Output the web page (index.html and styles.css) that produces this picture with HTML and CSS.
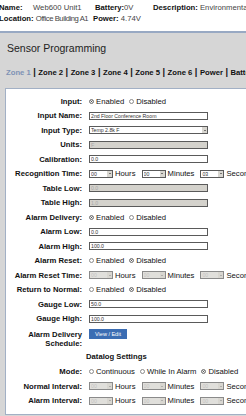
FILE: index.html
```html
<!DOCTYPE html>
<html lang="en">
<head>
    <meta charset="UTF-8">
    <meta name="viewport" content="width=device-width, initial-scale=1.0">
    <title>Sensor Programming</title>
    <link rel="stylesheet" href="styles.css">
</head>
<body>

    <div class="info">
        <div class="info-row">
            <span><b class="key">Name:</b>Web600 Unit1</span>
            <span><b>Battery:</b>0V</span>
            <span><b>Description:</b> Environmental Monitoring</span>
        </div>
        <div class="info-row">
            <span><b>Location:</b> <span class="tight">Office Building A1</span></span>
            <span class="shift"><b>Power:</b> 4.74V</span>
        </div>
    </div>

    <div class="panel">
        <h2>Sensor Programming</h2>
        <div class="tabs">
            <a class="tab active">Zone 1</a><span class="sep">|</span><a class="tab">Zone 2</a><span class="sep">|</span><a class="tab">Zone 3</a><span class="sep">|</span><a class="tab">Zone 4</a><span class="sep">|</span><a class="tab">Zone 5</a><span class="sep">|</span><a class="tab">Zone 6</a><span class="sep">|</span><a class="tab">Power</a><span class="sep">|</span><a class="tab">Battery</a>
        </div>

        <div class="box">
            <form id="sensorForm">
                <div class="row">
                    <label class="lbl">Input:</label>
                    <div class="field">
                        <label class="opt"><input type="radio" name="input" checked> Enabled</label>
                        <label class="opt"><input type="radio" name="input"> Disabled</label>
                    </div>
                </div>
                <div class="row">
                    <label class="lbl" for="inputName">Input Name:</label>
                    <div class="field"><input type="text" id="inputName" value="2nd Floor Conference Room"></div>
                </div>
                <div class="row">
                    <label class="lbl">Input Type:</label>
                    <div class="field"><span class="sel wide"><select><option>Temp 2.8k F</option></select></span></div>
                </div>
                <div class="row">
                    <label class="lbl">Units:</label>
                    <div class="field"><input type="text" value="F" disabled></div>
                </div>
                <div class="row">
                    <label class="lbl">Calibration:</label>
                    <div class="field"><input type="text" value="0.0"></div>
                </div>
                <div class="row">
                    <label class="lbl">Recognition Time:</label>
                    <div class="field">
                        <span class="sel"><select><option>00</option></select></span><span class="unit">Hours</span>
                        <span class="sel"><select><option>00</option></select></span><span class="unit">Minutes</span>
                        <span class="sel"><select><option>03</option></select></span><span class="unit">Seconds</span>
                    </div>
                </div>
                <div class="row">
                    <label class="lbl">Table Low:</label>
                    <div class="field"><input type="text" value="0.0" disabled></div>
                </div>
                <div class="row">
                    <label class="lbl">Table High:</label>
                    <div class="field"><input type="text" value="1.0" disabled></div>
                </div>
                <div class="row">
                    <label class="lbl">Alarm Delivery:</label>
                    <div class="field">
                        <label class="opt"><input type="radio" name="delivery" checked> Enabled</label>
                        <label class="opt"><input type="radio" name="delivery"> Disabled</label>
                    </div>
                </div>
                <div class="row">
                    <label class="lbl">Alarm Low:</label>
                    <div class="field"><input type="text" value="0.0"></div>
                </div>
                <div class="row">
                    <label class="lbl">Alarm High:</label>
                    <div class="field"><input type="text" value="100.0"></div>
                </div>
                <div class="row">
                    <label class="lbl">Alarm Reset:</label>
                    <div class="field">
                        <label class="opt"><input type="radio" name="reset"> Enabled</label>
                        <label class="opt"><input type="radio" name="reset" checked> Disabled</label>
                    </div>
                </div>
                <div class="row">
                    <label class="lbl">Alarm Reset Time:</label>
                    <div class="field">
                        <span class="sel off"><select disabled><option>00</option></select></span><span class="unit">Hours</span>
                        <span class="sel off"><select disabled><option>00</option></select></span><span class="unit">Minutes</span>
                        <span class="sel off"><select disabled><option>00</option></select></span><span class="unit">Seconds</span>
                    </div>
                </div>
                <div class="row">
                    <label class="lbl">Return to Normal:</label>
                    <div class="field">
                        <label class="opt"><input type="radio" name="normal"> Enabled</label>
                        <label class="opt"><input type="radio" name="normal" checked> Disabled</label>
                    </div>
                </div>
                <div class="row">
                    <label class="lbl">Gauge Low:</label>
                    <div class="field"><input type="text" value="50.0"></div>
                </div>
                <div class="row">
                    <label class="lbl">Gauge High:</label>
                    <div class="field"><input type="text" value="100.0"></div>
                </div>
                <div class="row tall">
                    <label class="lbl">Alarm Delivery Schedule:</label>
                    <div class="field"><button type="button" class="btn">View / Edit</button></div>
                </div>

                <div class="section">Datalog Settings</div>

                <div class="row">
                    <label class="lbl">Mode:</label>
                    <div class="field">
                        <label class="opt"><input type="radio" name="mode"> Continuous</label>
                        <label class="opt"><input type="radio" name="mode"> While In Alarm</label>
                        <label class="opt"><input type="radio" name="mode" checked> Disabled</label>
                    </div>
                </div>
                <div class="row">
                    <label class="lbl">Normal Interval:</label>
                    <div class="field">
                        <span class="sel off"><select disabled><option>00</option></select></span><span class="unit">Hours</span>
                        <span class="sel off"><select disabled><option>00</option></select></span><span class="unit">Minutes</span>
                        <span class="sel off"><select disabled><option>00</option></select></span><span class="unit">Seconds</span>
                    </div>
                </div>
                <div class="row">
                    <label class="lbl">Alarm Interval:</label>
                    <div class="field">
                        <span class="sel off"><select disabled><option>00</option></select></span><span class="unit">Hours</span>
                        <span class="sel off"><select disabled><option>00</option></select></span><span class="unit">Minutes</span>
                        <span class="sel off"><select disabled><option>00</option></select></span><span class="unit">Seconds</span>
                    </div>
                </div>
            </form>
        </div>
    </div>

</body>
</html>
```

FILE: styles.css
```css
body {
    margin: 0;
    width: 246px;
    height: 416px;
    overflow: hidden;
    font-family: "Liberation Sans", Arial, sans-serif;
    color: #111;
    background-color: white;
}

/* unit summary at the top */
.info {
    height: 31px;
    padding-top: 1.5px;
    box-sizing: border-box;
    font-size: 7.7px;
    line-height: 11px;
    color: #444;
    white-space: nowrap;
}

.info b {
    color: #111;
}

.info-row {
    display: grid;
    grid-template-columns: 96px 58px auto;
    margin-left: -1px;
}

.key {
    display: inline-block;
    width: 34px;
}

.tight {
    letter-spacing: -0.45px;
}

.shift {
    margin-left: -2px;
}

.panel {
    border-top: 2px solid #98a9c3;
    background-color: #d6d6d6;
    height: 383px;
}

h2 {
    margin: 0;
    padding: 8.5px 0 0 7px;
    font-size: 10.5px;
    font-weight: normal;
    line-height: 13px;
    color: #222;
}

.tabs {
    margin-top: 12px;
    padding-left: 6px;
    font-size: 7.7px;
    font-weight: bold;
    line-height: 11px;
    white-space: nowrap;
    overflow: hidden;
}

.tab {
    color: #111;
}

.tab.active {
    color: #7e92b5;
}

.sep {
    margin: 0 2.5px;
    font-size: 9px;
}

.box {
    margin: 10.5px 0 0 5px;
    padding-top: 4.75px;
    height: 320px;
    background-color: white;
    border: 1px solid #a2b0c5;
    border-right: none;
}

.row {
    display: flex;
    align-items: center;
    height: 14.5px;
    font-size: 7.7px;
    white-space: nowrap;
}

.lbl {
    width: 76px;
    margin-right: 7px;
    flex: none;
    text-align: right;
    font-weight: bold;
}

.field {
    display: flex;
    align-items: center;
}

input[type="text"] {
    width: 119px;
    height: 8px;
    box-sizing: border-box;
    margin: 0;
    padding: 0 1px;
    border: 1px solid #5a5a5a;
    font-family: inherit;
    font-size: 5.2px;
    color: #333;
    background-color: white;
}

input[type="text"]:disabled {
    background-color: #d4d2cc;
    color: #a8a8a8;
}

.opt {
    display: flex;
    align-items: center;
    margin-right: 5px;
}

input[type="radio"] {
    appearance: none;
    width: 5px;
    height: 5px;
    margin: 0 2px 0 0;
    border: 1px solid #8a8a8a;
    border-radius: 50%;
    background-color: white;
}

input[type="radio"]:checked {
    background-color: #222;
    box-shadow: inset 0 0 0 1px white;
}

.sel {
    position: relative;
    display: inline-block;
    width: 24px;
    height: 8px;
}

.sel.wide {
    width: 119px;
}

select {
    appearance: none;
    display: block;
    width: 100%;
    height: 8px;
    box-sizing: border-box;
    margin: 0;
    padding: 0 1px;
    border: 1px solid #5a5a5a;
    border-radius: 0;
    font-family: inherit;
    font-size: 5.2px;
    line-height: 6px;
    color: #333;
    background-color: white;
}

/* the little dropdown button */
.sel::after {
    content: "";
    position: absolute;
    top: 1px;
    right: 1px;
    width: 5px;
    height: 6px;
    background-color: #d8d6d0;
}

.sel::before {
    content: "";
    position: absolute;
    top: 3.5px;
    right: 2.5px;
    border-left: 1px solid transparent;
    border-right: 1px solid transparent;
    border-top: 1.5px solid #111;
    z-index: 1;
}

.sel.off select {
    background-color: #d4d2cc;
    color: #a8a8a8;
}

.sel.off::before {
    border-top-color: #888;
}

.unit {
    margin: 0 6px 0 2px;
}

.row.tall {
    align-items: flex-start;
    height: 24px;
}

.row.tall .lbl {
    padding-top: 4px;
    line-height: 9.5px;
    white-space: normal;
    padding-left: 20px;
    width: 56px;
}

.btn {
    margin-top: 3.5px;
    width: 38px;
    height: 10px;
    padding: 0;
    border: none;
    background-color: #3b6db3;
    color: white;
    font-family: inherit;
    font-size: 5.5px;
}

.section {
    height: 14.5px;
    line-height: 14.5px;
    padding-left: 80px;
    font-size: 7.7px;
    font-weight: bold;
}
```
